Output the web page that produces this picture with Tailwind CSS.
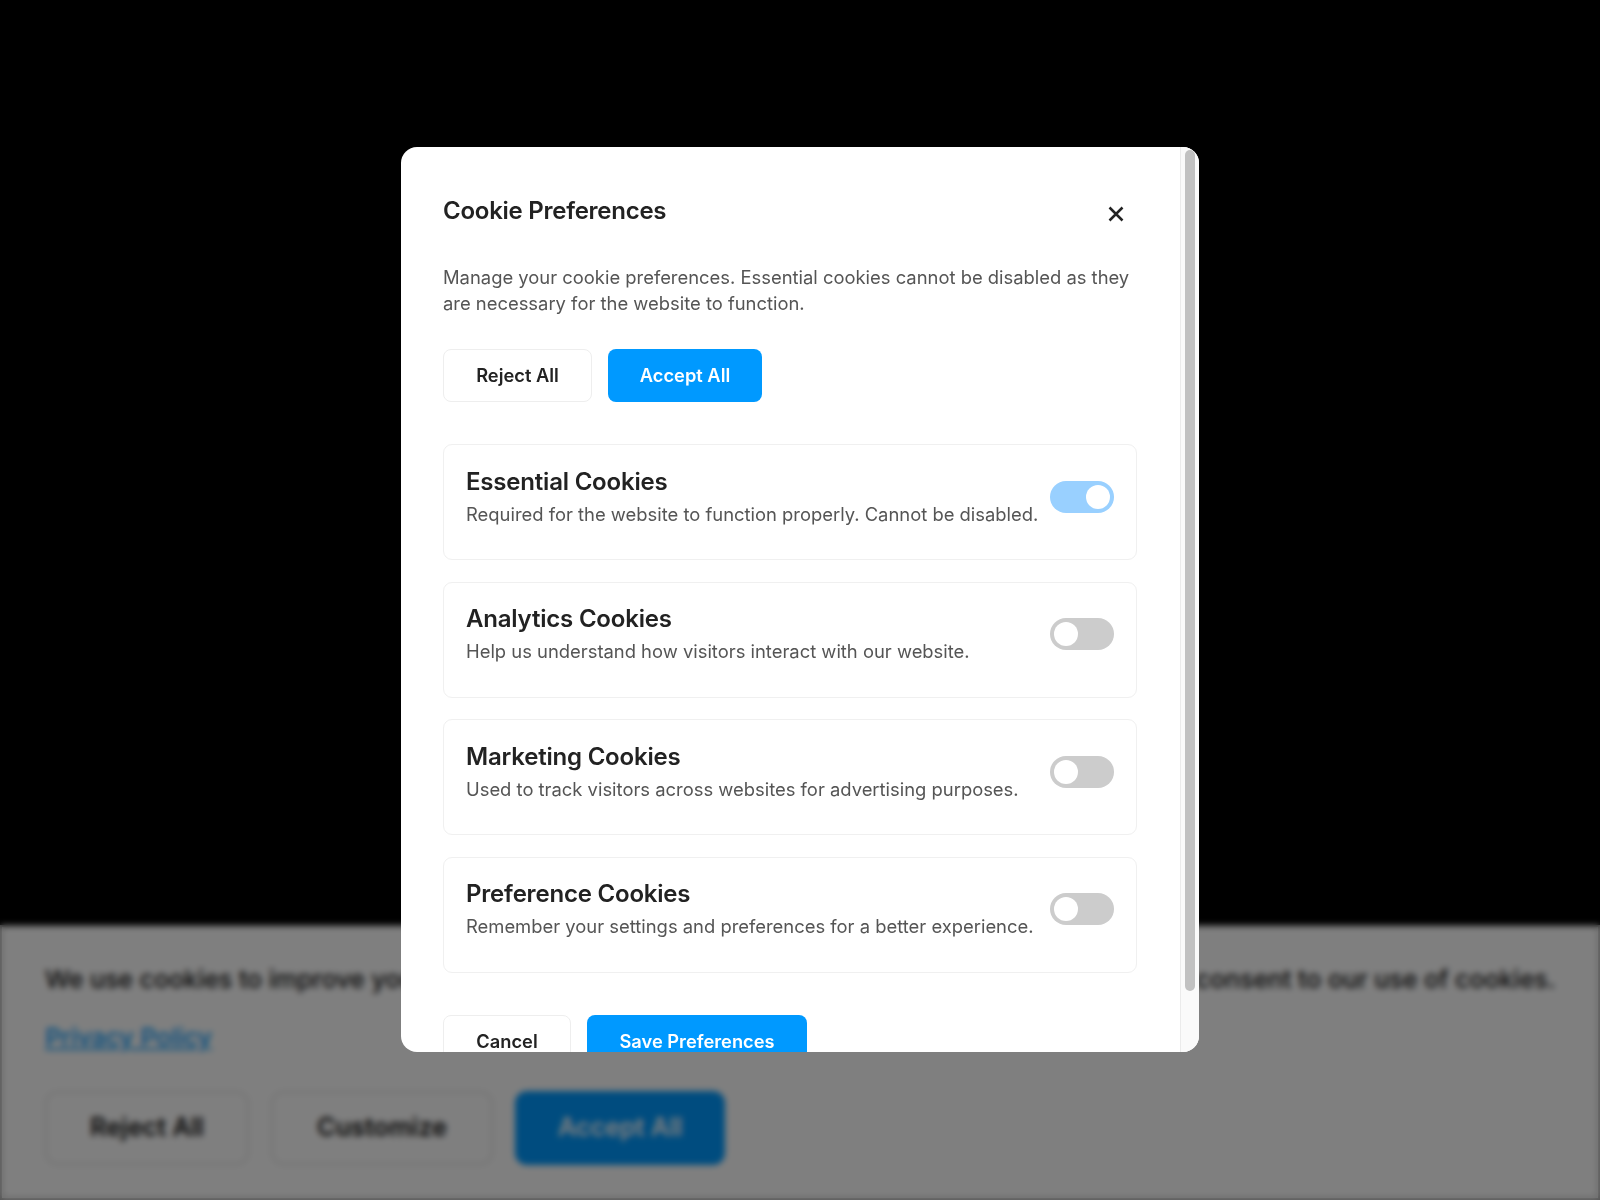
<!DOCTYPE html>
<html lang="en">
<head>
    <meta charset="UTF-8">
    <meta name="viewport" content="width=device-width, initial-scale=1.0">
    <script src="https://cdn.jsdelivr.net/npm/@tailwindcss/browser@4"></script>
    <title>Cookie Preferences</title>
</head>
<body class="bg-black font-[Inter,sans-serif] h-[1200px] overflow-hidden relative">
    <!-- cookie banner behind the overlay -->
    <div class="absolute bottom-0 left-0 right-0 h-[275px] bg-white border-2 border-[#aaa] pt-[32px] px-[43px]">
        <p class="text-[24.9px] leading-[40px] text-[#111] font-medium whitespace-nowrap">We use cookies to improve your browsing experience. By continuing to browse this website, you consent to our use of cookies.</p>
        <a href="#" class="block mt-[18px] text-[24.9px] leading-[40px] font-medium text-[#0099ff] underline">Privacy Policy</a>
        <div class="flex gap-[22px] mt-[34px]">
            <button class="h-[74px] w-[204px] rounded-[12px] border-2 border-[#e5e5e5] text-[25.2px] font-semibold text-[#111]">Reject All</button>
            <button class="h-[74px] w-[222px] rounded-[12px] border-2 border-[#e5e5e5] text-[25.2px] font-semibold text-[#111]">Customize</button>
            <button class="h-[74px] w-[210px] rounded-[12px] bg-[#0099ff] text-[25.2px] font-semibold text-white">Accept All</button>
        </div>
    </div>

    <div class="absolute inset-0 bg-black/50 backdrop-blur-[3px] flex items-center justify-center">
        <div class="w-[798px] h-[905px] mb-[1px] bg-white rounded-[16px] overflow-hidden flex">
            <div class="flex-1 min-w-0 overflow-hidden pl-[42px] pr-[43px] pt-[42px]">
                <div class="flex justify-between items-start h-[40px]">
                    <h2 class="text-[24px] leading-[40px] mt-[2px] font-semibold text-[#222] -tracking-[0.26px]">Cookie Preferences</h2>
                    <button class="mt-[17px] mr-[13px]" aria-label="Close">
                        <svg class="w-[16px] h-[16px] block" viewBox="0 0 16 16" fill="none" stroke="#222" stroke-width="2.5"><path d="M1.5 1.5l13 13M14.5 1.5l-13 13"/></svg>
                    </button>
                </div>
                <p class="mt-[35px] text-[18.4px] leading-[26px] text-[#555]">Manage your cookie preferences. Essential cookies cannot be disabled as they are necessary for the website to function.</p>
                <div class="flex gap-[16px] mt-[33px]">
                    <button class="h-[53px] w-[149px] rounded-[8px] border-[1.5px] border-[#eee] text-[18.3px] font-semibold text-[#222]">Reject All</button>
                    <button class="h-[53px] w-[154px] rounded-[8px] bg-[#0099ff] text-[18.3px] font-semibold text-white">Accept All</button>
                </div>
                <div class="mt-[42px] flex flex-col gap-[21.5px]">
                    <div class="h-[116px] rounded-[9px] border-[1.5px] border-[#f0f0f0] px-[22px] pt-[22px] flex justify-between items-start">
                        <div>
                            <h3 class="text-[24px] leading-[30px] font-semibold text-[#222] -tracking-[0.2px]">Essential Cookies</h3>
                            <p class="mt-[4px] text-[18.4px] leading-[26px] text-[#555]">Required for the website to function properly. Cannot be disabled.</p>
                        </div>
                        <div class="mt-[14px] w-[64px] h-[32px] shrink-0 rounded-full bg-[#99d0ff] flex items-center justify-end px-[4px]"><div class="w-[24px] h-[24px] rounded-full bg-white"></div></div>
                    </div>
                    <div class="h-[116px] rounded-[9px] border-[1.5px] border-[#f0f0f0] px-[22px] pt-[21.5px] flex justify-between items-start">
                        <div>
                            <h3 class="text-[24px] leading-[30px] font-semibold text-[#222] -tracking-[0.2px]">Analytics Cookies</h3>
                            <p class="mt-[4px] text-[18.4px] leading-[26px] text-[#555]">Help us understand how visitors interact with our website.</p>
                        </div>
                        <div class="mt-[14px] w-[64px] h-[32px] shrink-0 rounded-full bg-[#ccc] flex items-center px-[4px]"><div class="w-[24px] h-[24px] rounded-full bg-white"></div></div>
                    </div>
                    <div class="h-[116px] rounded-[9px] border-[1.5px] border-[#f0f0f0] px-[22px] pt-[21.5px] flex justify-between items-start">
                        <div>
                            <h3 class="text-[24px] leading-[30px] font-semibold text-[#222] -tracking-[0.2px]">Marketing Cookies</h3>
                            <p class="mt-[4px] text-[18.4px] leading-[26px] text-[#555]">Used to track visitors across websites for advertising purposes.</p>
                        </div>
                        <div class="mt-[14px] w-[64px] h-[32px] shrink-0 rounded-full bg-[#ccc] flex items-center px-[4px]"><div class="w-[24px] h-[24px] rounded-full bg-white"></div></div>
                    </div>
                    <div class="h-[116px] rounded-[9px] border-[1.5px] border-[#f0f0f0] px-[22px] pt-[21.5px] flex justify-between items-start">
                        <div>
                            <h3 class="text-[24px] leading-[30px] font-semibold text-[#222] -tracking-[0.2px]">Preference Cookies</h3>
                            <p class="mt-[4px] text-[18.4px] leading-[26px] text-[#555]">Remember your settings and preferences for a better experience.</p>
                        </div>
                        <div class="mt-[14px] w-[64px] h-[32px] shrink-0 rounded-full bg-[#ccc] flex items-center px-[4px]"><div class="w-[24px] h-[24px] rounded-full bg-white"></div></div>
                    </div>
                </div>
                <div class="flex gap-[16px] mt-[42.5px]">
                    <button class="h-[53px] w-[128px] rounded-[8px] border-[1.5px] border-[#eee] text-[18.3px] font-semibold text-[#222]">Cancel</button>
                    <button class="h-[53px] w-[220px] rounded-[8px] bg-[#0099ff] text-[18.3px] font-semibold text-white">Save Preferences</button>
                </div>
            </div>
            <!-- scrollbar -->
            <div class="w-[19px] shrink-0 bg-[#fafafa] border-l border-[#ebebeb] pt-[3px] pl-[4px]">
                <div class="w-[10px] h-[841px] rounded-full bg-[#c1c1c1]"></div>
            </div>
        </div>
    </div>
</body>
</html>
